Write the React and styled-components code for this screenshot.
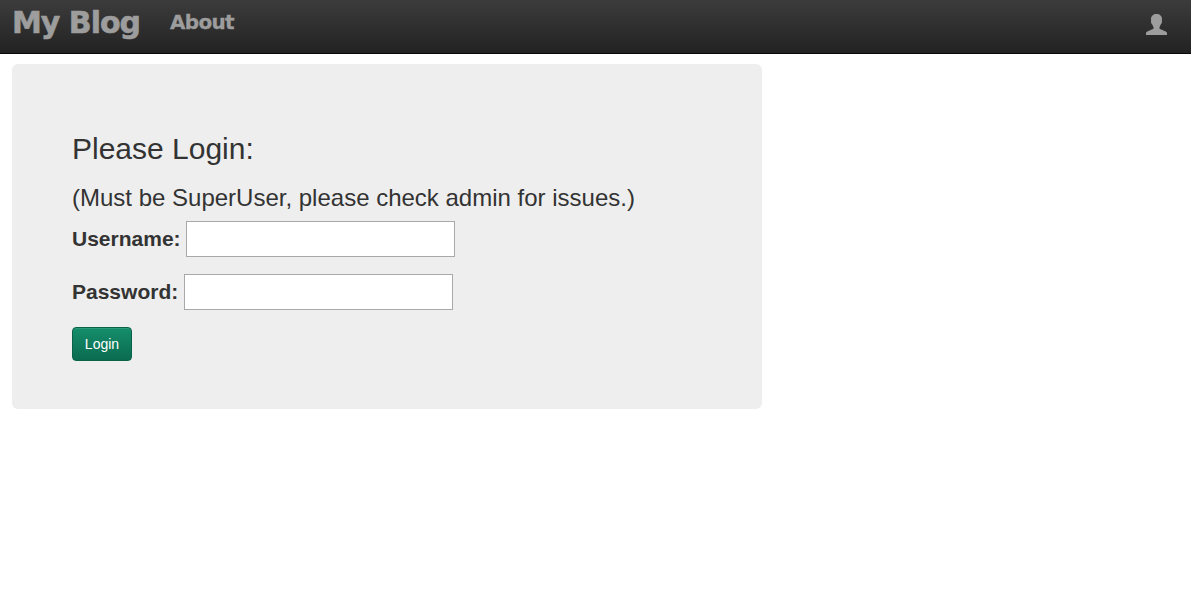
import React from "react";
import styled, { createGlobalStyle } from "styled-components";

const GlobalStyle = createGlobalStyle`
  *, *::before, *::after { box-sizing: border-box; }
  body {
    margin: 0;
    background: #fff;
    color: #333;
    font-family: "Liberation Sans", Arial, sans-serif;
  }
`;

const Navbar = styled.header`
  display: flex;
  align-items: flex-start;
  height: 54px;
  padding: 0 24px 0 12px;
  background: linear-gradient(to bottom, #3c3c3c 0%, #222 100%);
  border-bottom: 1px solid #080808;
`;

const NavLink = styled.a`
  color: #9d9d9d;
  font-family: "DejaVu Sans", sans-serif;
  font-weight: 700;
  white-space: nowrap;
  text-decoration: none;
`;

const Brand = styled(NavLink)`
  width: 158px;
  padding-top: 5px;
  font-size: 30px;
  line-height: 36px;
  letter-spacing: -1px;
  -webkit-text-stroke: 0.6px currentColor;
`;

const PageLink = styled(NavLink)`
  padding-top: 10px;
  font-size: 20px;
  line-height: 24px;
  letter-spacing: -0.7px;
  -webkit-text-stroke: 0.3px currentColor;
`;

const UserLink = styled.a`
  margin: 14px 0 0 auto;
  line-height: 0;
  color: #9d9d9d;
`;

const Panel = styled.main`
  width: 750px;
  height: 345px;
  margin: 10px 0 0 12px;
  padding: 68px 60px 48px;
  background: #eee;
  border-radius: 6px;
`;

const Title = styled.h2`
  margin: 0;
  font-size: 30px;
  font-weight: 400;
  line-height: 33px;
`;

const Hint = styled.h3`
  margin: 20px 0 10px;
  font-size: 24px;
  font-weight: 400;
  line-height: 26px;
`;

const Field = styled.div`
  display: flex;
  align-items: center;
  gap: 5.8px;
  height: 36px;
  margin-bottom: 17px;
`;

const Label = styled.label`
  font-size: 21px;
  font-weight: 700;
  line-height: 30px;
`;

const Input = styled.input`
  width: 269px;
  height: 36px;
  margin: 0;
  padding: 1px 2px;
  border: 1px solid #a9a9a9;
  border-radius: 0;
  background: #fff;
  font: 21px "Liberation Sans", Arial, sans-serif;
`;

const Button = styled.button`
  display: block;
  width: 60px;
  height: 34px;
  padding: 0;
  border: 1px solid #0a6249;
  border-radius: 4px;
  background: linear-gradient(to bottom, #148e6b 0%, #0b6b50 100%);
  box-shadow: inset 0 1px 0 rgba(255, 255, 255, 0.1);
  color: #fff;
  font: 14px/20px "Liberation Sans", Arial, sans-serif;
`;

const UserIcon = () => (
  <svg width="21" height="21" viewBox="0 0 21 21" fill="currentColor" aria-hidden="true">
    <path d="M10.5 0C7.2 0 5 2 5 5.2c0 .7.1 1.2.2 1.800-.4.4-.3 1.500.3 2.500.4.700.8 1 1.100 1.800.3.800.6 1.300.9 1.700v1.700L1.300 17.500C.3 18 0 18.600 0 19.500V21h21v-1.500c0-.9-.3-1.500-1.300-2l-6.200-2.800V13c.3-.4.6-.9.9-1.700.3-.8.7-1.100 1.100-1.800.6-1 .7-2.100.3-2.500.1-.6.2-1.100.2-1.800C16 2 13.800 0 10.500 0z" />
  </svg>
);

export default function App() {
  return (
    <>
      <GlobalStyle />
      <Navbar>
        <Brand>My Blog</Brand>
        <PageLink>About</PageLink>
        <UserLink aria-label="Account">
          <UserIcon />
        </UserLink>
      </Navbar>
      <Panel>
        <Title>Please Login:</Title>
        <Hint>(Must be SuperUser, please check admin for issues.)</Hint>
        <form>
          <Field>
            <Label htmlFor="username">Username:</Label>
            <Input id="username" type="text" />
          </Field>
          <Field>
            <Label htmlFor="password">Password:</Label>
            <Input id="password" type="password" />
          </Field>
          <Button type="button">Login</Button>
        </form>
      </Panel>
    </>
  );
}
